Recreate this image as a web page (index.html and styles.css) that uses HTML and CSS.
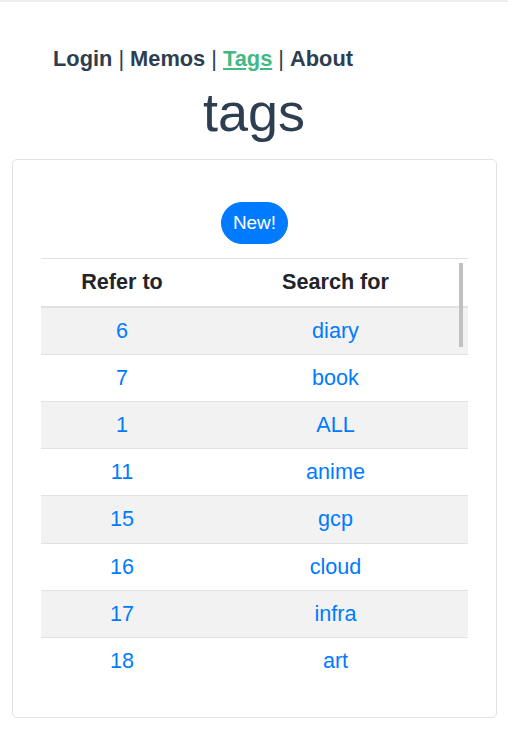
FILE: index.html
```html
<!DOCTYPE html>
<html>
<head>
<meta charset="utf-8">
<link rel="stylesheet" href="styles.css">
</head>
<body>
<div class="app">
  <nav class="nav">
    <a class="nav-link" href="#">Login</a> | <a class="nav-link" href="#">Memos</a> | <a class="nav-link active" href="#">Tags</a> | <a class="nav-link" href="#">About</a>
  </nav>
  <h1 class="title">tags</h1>
  <div class="card">
    <div class="actions">
      <button class="btn-new">New!</button>
    </div>
    <div class="table-wrap">
      <table class="tag-table">
        <thead>
          <tr><th class="col-ref">Refer to</th><th class="col-search">Search for</th></tr>
        </thead>
        <tbody>
          <tr><td><a href="#">6</a></td><td><a href="#">diary</a></td></tr>
          <tr><td><a href="#">7</a></td><td><a href="#">book</a></td></tr>
          <tr><td><a href="#">1</a></td><td><a href="#">ALL</a></td></tr>
          <tr><td><a href="#">11</a></td><td><a href="#">anime</a></td></tr>
          <tr><td><a href="#">15</a></td><td><a href="#">gcp</a></td></tr>
          <tr><td><a href="#">16</a></td><td><a href="#">cloud</a></td></tr>
          <tr><td><a href="#">17</a></td><td><a href="#">infra</a></td></tr>
          <tr><td><a href="#">18</a></td><td><a href="#">art</a></td></tr>
        </tbody>
      </table>
      <div class="scroll-thumb"></div>
    </div>
  </div>
</div>
</body>
</html>
```
FILE: styles.css
```css
html, body {
  margin: 0;
  padding: 0;
  background: #fff;
}
body {
  border-top: 2px solid #eeeeee;
  font-family: "Liberation Sans", Arial, sans-serif;
  font-size: 21.6px;
  line-height: 1.5;
  color: #2c3e50;
}
.nav {
  padding: 41px 0 0 53px;
  line-height: 32.4px;
  font-size: 21.8px;
  color: #2c3e50;
}
.nav-link {
  font-weight: bold;
  color: #2c3e50;
  text-decoration: none;
}
.nav-link.active {
  color: #42b983;
  text-decoration: underline;
}
.title {
  margin: 4.6px 0 0;
  font-size: 54px;
  line-height: 64.8px;
  font-weight: 500;
  text-align: center;
  color: #2c3e50;
}
.card {
  margin: 14px 11px 0 12px;
  border: 1px solid #e2e2e2;
  border-radius: 5px;
  padding: 42.5px 28px 32.5px;
}
.actions {
  display: flex;
  justify-content: center;
  margin-bottom: 14.5px;
}
.btn-new {
  font-family: "Liberation Sans", Arial, sans-serif;
  font-size: 18.9px;
  line-height: 28.4px;
  color: #fff;
  background: #007bff;
  border: 1px solid #007bff;
  border-radius: 21px;
  padding: 5.4px 11px;
  height: 41.7px;
  cursor: pointer;
}
.table-wrap {
  position: relative;
}
.tag-table {
  width: 100%;
  border-collapse: collapse;
  color: #212529;
}
.tag-table th,
.tag-table td {
  text-align: center;
  padding: 6.9px 6px;
  line-height: 32.4px;
  border-top: 1px solid #dee2e6;
}
.tag-table th {
  font-weight: bold;
  border-bottom: 2px solid #dee2e6;
}
.col-ref {
  width: 150px;
}
.tag-table tbody tr:nth-child(odd) {
  background: #f2f2f2;
}
.tag-table a {
  color: #007bff;
  text-decoration: none;
}
.scroll-thumb {
  position: absolute;
  left: 418px;
  top: 5px;
  width: 4px;
  height: 84px;
  background: #c1c1c1;
}
```
